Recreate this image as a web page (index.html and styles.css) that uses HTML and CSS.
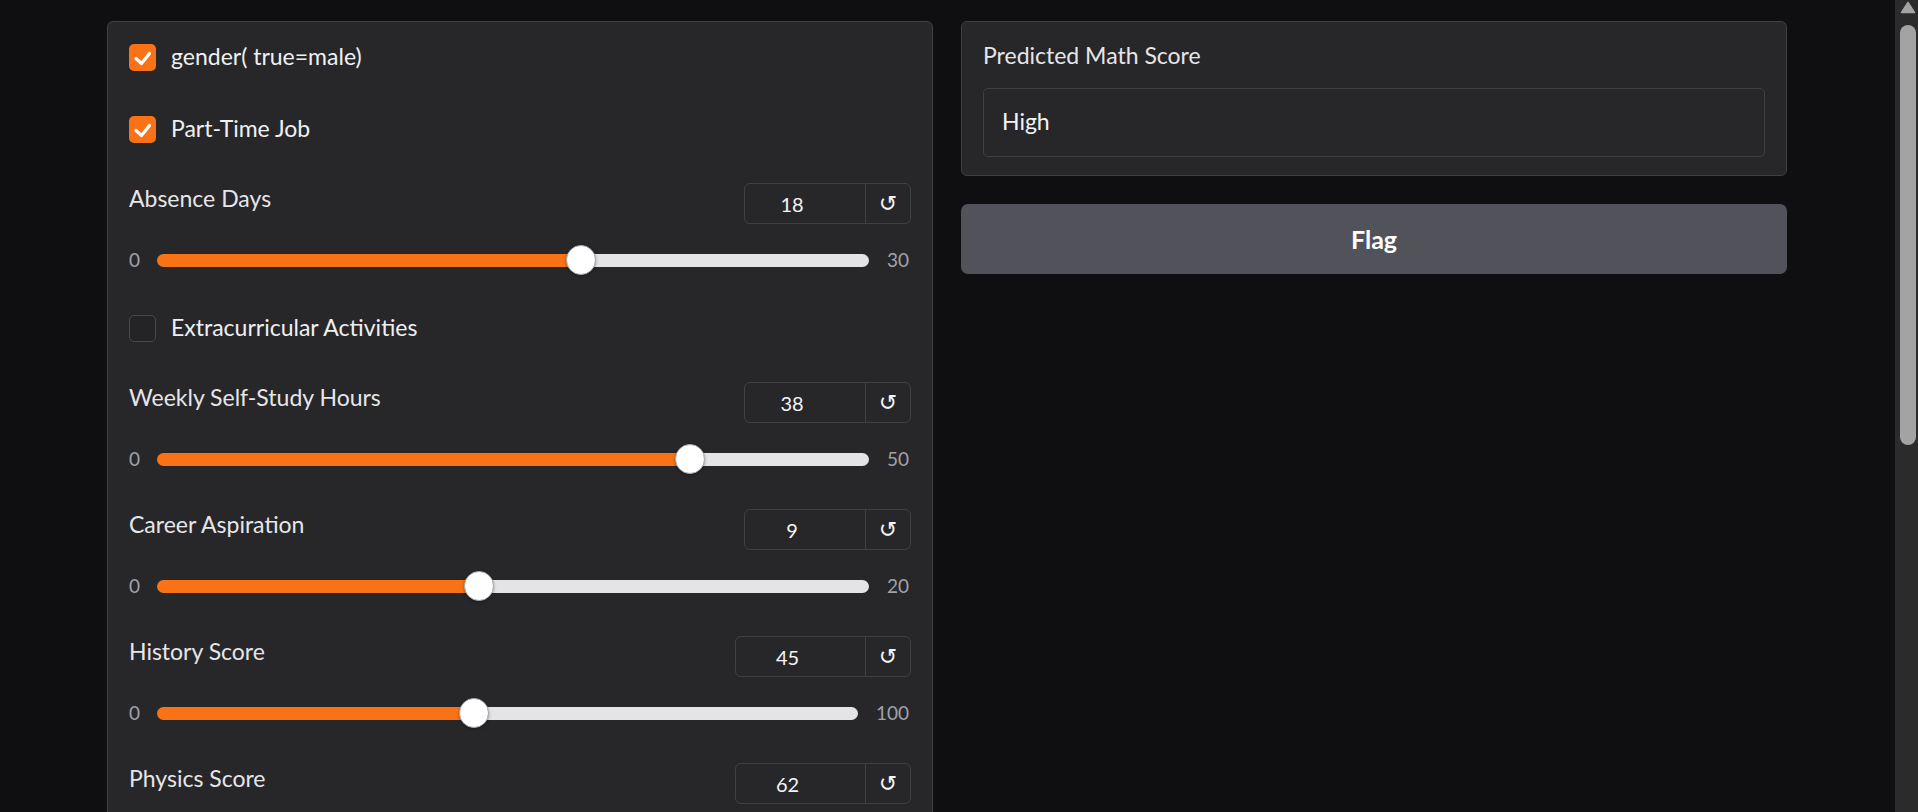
FILE: index.html
```html
<!DOCTYPE html>
<html lang="en">
<head>
<meta charset="utf-8">
<title>Student Math Score Predictor</title>
<link rel="stylesheet" href="styles.css">
</head>
<body>
<div class="app">
  <main class="page">
    <div class="columns">
      <section class="panel form">
        <label class="check-item">
          <span class="box checked"><svg viewBox="0 0 27 27"><path d="M7 14.5 L12.5 19.5 L20.5 9.5"/></svg></span>
          <span class="check-label">gender( true=male)</span>
        </label>
        <label class="check-item">
          <span class="box checked"><svg viewBox="0 0 27 27"><path d="M7 14.5 L12.5 19.5 L20.5 9.5"/></svg></span>
          <span class="check-label">Part-Time Job</span>
        </label>

        <div class="slider-item">
          <div class="slider-head">
            <span class="block-label">Absence Days</span>
            <div class="number-box">
              <input class="num" type="number" value="18">
              <button class="reset" type="button">↺</button>
            </div>
          </div>
          <div class="slider-row">
            <span class="min">0</span>
            <input class="range" type="range" min="0" max="30" value="18" style="--p:0.6">
            <span class="max">30</span>
          </div>
        </div>

        <label class="check-item">
          <span class="box unchecked"></span>
          <span class="check-label">Extracurricular Activities</span>
        </label>

        <div class="slider-item">
          <div class="slider-head">
            <span class="block-label">Weekly Self-Study Hours</span>
            <div class="number-box">
              <input class="num" type="number" value="38">
              <button class="reset" type="button">↺</button>
            </div>
          </div>
          <div class="slider-row">
            <span class="min">0</span>
            <input class="range" type="range" min="0" max="50" value="38" style="--p:0.76">
            <span class="max">50</span>
          </div>
        </div>

        <div class="slider-item">
          <div class="slider-head">
            <span class="block-label">Career Aspiration</span>
            <div class="number-box">
              <input class="num" type="number" value="9">
              <button class="reset" type="button">↺</button>
            </div>
          </div>
          <div class="slider-row">
            <span class="min">0</span>
            <input class="range" type="range" min="0" max="20" value="9" style="--p:0.45">
            <span class="max">20</span>
          </div>
        </div>

        <div class="slider-item">
          <div class="slider-head">
            <span class="block-label">History Score</span>
            <div class="number-box">
              <input class="num wide" type="number" value="45">
              <button class="reset" type="button">↺</button>
            </div>
          </div>
          <div class="slider-row">
            <span class="min">0</span>
            <input class="range" type="range" min="0" max="100" value="45" style="--p:0.45">
            <span class="max wide">100</span>
          </div>
        </div>

        <div class="slider-item">
          <div class="slider-head">
            <span class="block-label">Physics Score</span>
            <div class="number-box">
              <input class="num wide" type="number" value="62">
              <button class="reset" type="button">↺</button>
            </div>
          </div>
        </div>
      </section>

      <div class="side">
        <section class="panel output">
          <div class="block-label out-label">Predicted Math Score</div>
          <div class="textbox">High</div>
        </section>
        <button class="flag" type="button">Flag</button>
      </div>
    </div>
  </main>
  <div class="scrollbar">
    <svg class="arrow" viewBox="0 0 16 13"><path d="M8 1.5 L14.5 11.5 H1.5 Z"/></svg>
    <div class="thumb"></div>
  </div>
</div>
</body>
</html>
```

FILE: styles.css
```css
* { box-sizing: border-box; }

html, body {
  margin: 0;
  height: 100%;
}

body {
  background: #0f0f11;
  color: #ececee;
  font-family: Lato, "Liberation Sans", sans-serif;
  overflow: hidden;
}

.app {
  display: flex;
  height: 812px;
}

.page {
  flex: 1;
  min-width: 0;
  padding: 21px 108px 0 107px;
}

.columns {
  display: grid;
  grid-template-columns: 826px 826px;
  column-gap: 28px;
  align-items: start;
}

.panel {
  background: #27272a;
  border: 1px solid #3f3f46;
  border-radius: 6px;
}

/* ---------- left form ---------- */
.form {
  padding: 17px 21px 21px;
  display: flex;
  flex-direction: column;
  gap: 35px;
}

.check-item {
  display: flex;
  align-items: center;
  gap: 15px;
  height: 37px;
}

.box {
  flex: none;
  width: 27px;
  height: 27px;
  border-radius: 5px;
  display: flex;
}

.box.checked { background: #f97316; }

.box.unchecked {
  background: #242427;
  border: 1px solid #48484f;
}

.box svg {
  width: 27px;
  height: 27px;
  fill: none;
  stroke: #ffffff;
  stroke-width: 3.2;
  stroke-linecap: round;
  stroke-linejoin: round;
}

.check-label {
  font-size: 23px;
  line-height: 29px;
  padding-bottom: 3px;
  color: #f0f0f2;
}

.block-label {
  font-size: 23px;
  line-height: 31px;
  color: #e6e6e9;
}

.slider-head {
  display: flex;
  justify-content: space-between;
  align-items: flex-start;
  height: 41px;
}

.number-box {
  display: flex;
  height: 41px;
  border: 1px solid #3f3f46;
  border-radius: 6px;
}

.num {
  width: 120px;
  height: 39px;
  border: none;
  background: transparent;
  color: #f4f4f5;
  font-family: Lato, "Liberation Sans", sans-serif;
  font-size: 20px;
  text-align: center;
  padding: 0 26px 0 0;
  outline: none;
  -moz-appearance: textfield;
}

.num.wide { width: 129px; }

.num::-webkit-inner-spin-button,
.num::-webkit-outer-spin-button {
  -webkit-appearance: none;
  margin: 0;
}

.reset {
  width: 45px;
  height: 39px;
  border: none;
  border-left: 1px solid #3f3f46;
  background: transparent;
  color: #f4f4f5;
  font-family: "DejaVu Sans", sans-serif;
  font-size: 22px;
  padding: 0;
  display: flex;
  align-items: center;
  justify-content: center;
}

.slider-row {
  display: flex;
  align-items: center;
  height: 30px;
  margin-top: 21px;
}

.min, .max {
  font-size: 19px;
  line-height: 30px;
  color: #a1a1aa;
  flex: none;
}

.min {
  width: 11px;
  margin-right: 17px;
}

.max {
  width: 24px;
  margin-left: 18px;
}

.max.wide { width: 35px; }

.range {
  flex: 1;
  min-width: 0;
  height: 30px;
  margin: 0;
  padding: 0;
  background: transparent;
  -webkit-appearance: none;
  appearance: none;
}

.range::-webkit-slider-runnable-track {
  height: 13px;
  border-radius: 7px;
  background: linear-gradient(to right,
    #f97316 calc(15px + (100% - 30px) * var(--p)),
    #e4e4e7 0);
}

.range::-webkit-slider-thumb {
  -webkit-appearance: none;
  appearance: none;
  width: 30px;
  height: 30px;
  margin-top: -8.5px;
  border-radius: 50%;
  background: #ffffff;
  border: 1px solid #a8a8ae;
  box-shadow: 0 1px 3px rgba(0, 0, 0, 0.35);
}

/* ---------- right side ---------- */
.side {
  display: flex;
  flex-direction: column;
  gap: 28px;
}

.output {
  padding: 17px 21px 18px;
}

.out-label {
  line-height: 33px;
  margin-bottom: 16px;
}

.textbox {
  height: 69px;
  border: 1px solid #3f3f46;
  border-radius: 5px;
  padding: 0 18px 4px;
  display: flex;
  align-items: center;
  font-size: 23px;
  color: #f4f4f5;
}

.flag {
  height: 70px;
  width: 100%;
  border: none;
  border-radius: 7px;
  background: #52525b;
  color: #ffffff;
  font-family: Lato, "Liberation Sans", sans-serif;
  font-weight: 700;
  font-size: 25px;
}

/* ---------- scrollbar ---------- */
.scrollbar {
  flex: none;
  width: 23px;
  height: 812px;
  background: #2b2b2b;
  display: flex;
  flex-direction: column;
  align-items: center;
}

.arrow {
  width: 16px;
  height: 13px;
  margin-top: 1px;
  margin-left: 3px;
  fill: #a3a3a3;
  stroke: #a3a3a3;
  stroke-width: 1.5;
  stroke-linejoin: round;
}

.thumb {
  width: 16px;
  height: 420px;
  margin-top: 11px;
  margin-left: 3px;
  border-radius: 8px;
  background: #a3a3a3;
}
```
